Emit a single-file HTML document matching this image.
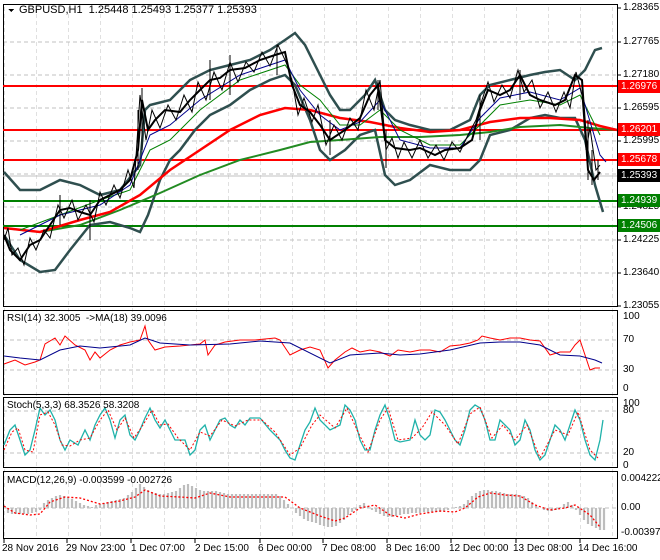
<!DOCTYPE html>
<html><head><meta charset="utf-8"><style>
body{margin:0;background:#fff;width:660px;height:560px;overflow:hidden;font-family:"Liberation Sans",sans-serif}
.l{position:absolute;font-size:10px;color:#000;white-space:nowrap}
.tag{position:absolute;left:618px;width:42px;height:13px;font-size:10px;color:#fff;line-height:13px;padding-left:3px;box-sizing:border-box}
</style></head><body>
<svg width="660" height="560" style="position:absolute;left:0;top:0" shape-rendering="crispEdges">
<defs><pattern id="g" x="4" y="0" width="32" height="560" patternUnits="userSpaceOnUse"><line x1="0" y1="0" x2="0" y2="560" stroke="#c0c0c0" stroke-dasharray="4,3"/></pattern></defs>
<rect x="4" y="4" width="613" height="534" fill="url(#g)"/>
<g stroke="#c0c0c0" stroke-dasharray="4,3">
<line x1="3" y1="42" x2="617" y2="42"/><line x1="3" y1="75" x2="617" y2="75"/><line x1="3" y1="108" x2="617" y2="108"/><line x1="3" y1="141" x2="617" y2="141"/><line x1="3" y1="174" x2="617" y2="174"/><line x1="3" y1="207" x2="617" y2="207"/><line x1="3" y1="240" x2="617" y2="240"/><line x1="3" y1="273" x2="617" y2="273"/>
<line x1="3" y1="340" x2="617" y2="340"/><line x1="3" y1="370" x2="617" y2="370"/>
<line x1="3" y1="411" x2="617" y2="411"/><line x1="3" y1="453" x2="617" y2="453"/>
<line x1="3" y1="508" x2="617" y2="508"/>
</g>
<g fill="none" stroke="#000">
<rect x="3.5" y="4.5" width="614" height="302"/>
<rect x="3.5" y="310.5" width="614" height="84"/>
<rect x="3.5" y="397.5" width="614" height="70"/>
<rect x="3.5" y="471.5" width="614" height="67"/>
</g>
<g shape-rendering="auto">
<line x1="3" y1="86" x2="617" y2="86" stroke="#f00" stroke-width="2"/>
<line x1="3" y1="130" x2="617" y2="130" stroke="#f00" stroke-width="2"/>
<line x1="3" y1="160" x2="617" y2="160" stroke="#f00" stroke-width="2"/>
<line x1="3" y1="201" x2="617" y2="201" stroke="#008000" stroke-width="2"/>
<line x1="3" y1="226" x2="617" y2="226" stroke="#008000" stroke-width="2"/>
<line x1="3" y1="176" x2="617" y2="176" stroke="#c0c0c0"/>
<polyline fill="none" stroke="#2f4f4f" stroke-width="2.5" points="4,172 20,190 40,190 60,180 80,185 100,195 120,190 140,165 145,110 150,105 170,100 190,80 210,70 230,65 250,60 270,50 285,40 295,33 305,45 320,75 330,95 340,110 350,110 365,95 375,80 385,110 395,120 410,125 430,130 450,130 470,120 480,95 490,85 510,80 530,75 545,72 560,70 575,80 585,70 595,50 602,48"/>
<polyline fill="none" stroke="#2f4f4f" stroke-width="2.5" points="4,235 20,260 40,272 55,270 70,250 90,225 110,222 130,228 140,232 148,215 160,180 170,160 180,150 195,130 210,115 230,105 250,90 270,80 285,75 295,85 310,120 320,150 330,160 345,150 360,135 375,130 385,175 395,185 410,180 430,165 450,170 470,170 480,160 490,135 510,130 530,118 545,115 560,118 575,118 585,140 595,185 603,212"/>
<polyline fill="none" stroke="#228b22" stroke-width="2" points="4,228 40,232 80,225 120,210 160,193 200,175 240,160 280,150 310,142 340,140 380,137 420,137 460,135 490,132 520,127 560,125 590,128 617,130"/>
<polyline fill="none" stroke="#f00" stroke-width="2.5" points="4,228 40,232 80,220 110,212 140,195 170,170 200,150 230,130 260,115 285,108 310,110 340,118 370,122 400,128 430,132 460,130 490,122 520,118 550,118 580,120 600,126 617,130"/>
<polyline fill="none" stroke="#008000" points="20,230 60,215 100,200 130,190 150,150 170,140 200,110 240,80 285,65 300,85 320,100 340,125 360,125 380,110 400,130 430,145 460,145 480,125 500,105 530,100 560,105 580,95 600,135"/>
<polyline fill="none" stroke="#00008b" points="20,235 60,215 100,205 130,185 150,135 170,125 200,100 240,75 285,60 300,90 320,115 340,130 360,122 380,100 400,140 430,148 460,148 480,118 500,98 530,92 560,100 580,88 600,155 606,162"/>
<polyline fill="none" stroke="#000" stroke-width="2" points="4,235 10,250 20,260 30,245 40,240 50,225 60,210 70,208 80,212 90,215 100,200 110,195 120,190 130,180 138,150 142,100 148,130 155,120 165,110 180,112 190,100 200,90 210,80 220,78 230,70 245,68 260,60 275,55 285,52 292,85 300,105 310,112 320,125 330,140 345,130 360,118 370,95 378,85 385,140 395,148 410,150 420,148 435,155 445,150 460,148 472,140 480,110 488,90 500,95 510,90 520,75 530,95 540,100 555,105 565,100 575,75 582,80 588,170 594,180 600,172"/>
<polyline fill="none" stroke="#000" stroke-width="1" points="4,240 8,228 12,255 18,248 24,265 30,238 36,250 44,230 50,238 58,205 64,218 72,200 78,220 86,205 94,222 100,192 106,205 114,185 120,198 128,170 134,188 140,95 146,140 152,110 160,128 168,105 176,120 184,95 192,112 198,82 206,100 214,72 222,90 230,62 238,82 246,62 254,72 262,52 270,66 278,45 286,62 292,80 298,115 304,98 312,122 318,105 326,145 334,125 342,140 350,118 358,130 366,90 374,110 380,80 386,150 392,138 398,158 404,142 412,158 420,140 428,158 436,145 444,160 452,142 460,152 468,135 476,120 482,100 488,82 494,102 502,85 510,98 518,70 524,92 532,80 540,108 548,92 556,112 564,92 570,108 576,72 582,95 586,150 590,128 596,170 600,165"/>
<g stroke="#000"><line x1="142" y1="88" x2="142" y2="150"/><line x1="138" y1="110" x2="138" y2="170"/><line x1="210" y1="60" x2="210" y2="100"/><line x1="230" y1="55" x2="230" y2="95"/><line x1="277" y1="45" x2="277" y2="75"/><line x1="330" y1="120" x2="330" y2="155"/><line x1="378" y1="80" x2="378" y2="110"/><line x1="386" y1="130" x2="386" y2="168"/><line x1="480" y1="95" x2="480" y2="140"/><line x1="520" y1="70" x2="520" y2="100"/><line x1="588" y1="120" x2="588" y2="180"/><line x1="592" y1="150" x2="592" y2="185"/><line x1="598" y1="160" x2="598" y2="180"/><line x1="90" y1="200" x2="90" y2="240"/><line x1="60" y1="195" x2="60" y2="225"/></g>
<polyline fill="none" stroke="#f00" points="4,364 15,360 25,365 35,362 40,360 45,344 55,338 60,345 65,336 75,345 85,350 90,360 95,352 100,358 110,350 120,345 130,342 140,340 145,326 148,340 155,350 165,347 180,346 200,344 205,340 208,355 215,345 225,342 240,340 255,340 265,339 275,338 280,340 290,355 300,350 310,347 320,350 328,368 335,360 345,352 352,348 360,352 370,350 380,352 390,356 398,350 410,352 420,350 430,350 440,352 450,346 460,345 470,343 478,340 482,336 490,338 500,340 510,338 520,338 530,340 540,341 550,355 560,352 570,352 575,345 580,340 585,355 590,370 595,368 600,368"/>
<polyline fill="none" stroke="#00008b" points="4,356 20,358 40,360 60,350 80,346 100,348 130,345 145,338 160,343 190,345 230,344 260,341 290,343 330,363 350,355 380,353 400,355 420,354 450,350 480,343 500,342 520,342 540,345 560,355 580,356 595,360 602,363"/>
<polyline fill="none" stroke="#20b2aa" stroke-width="1.3" points="4,445 10,430 15,425 20,440 25,455 30,450 35,430 40,408 45,415 50,410 55,420 60,440 65,450 70,440 78,445 85,430 90,440 95,425 100,415 105,408 110,420 115,438 120,420 125,415 130,435 135,440 140,430 145,418 150,408 155,420 160,428 165,420 170,430 175,440 180,440 185,440 190,455 195,450 200,430 205,425 210,440 215,430 220,420 225,418 230,425 235,428 240,420 245,425 250,418 260,418 270,430 280,440 285,450 290,458 295,460 300,445 305,430 310,422 315,408 320,420 330,430 340,425 345,405 350,410 355,420 360,440 365,450 370,450 375,430 380,415 385,405 390,420 395,440 400,442 410,440 415,420 420,435 425,440 430,435 435,410 440,412 445,420 450,430 455,440 460,445 465,430 470,410 475,405 480,408 485,420 490,440 495,440 500,420 505,425 510,430 515,445 520,440 525,420 530,430 535,450 540,460 545,455 550,440 555,425 560,430 565,440 570,425 575,410 580,420 585,440 590,455 595,460 600,440 603,420"/>
<polyline fill="none" stroke="#f00" stroke-dasharray="2,2" points="4,450 12,432 18,428 25,450 33,452 40,415 48,412 55,425 62,445 70,446 80,440 90,438 100,420 108,410 117,430 125,418 134,438 143,425 152,410 160,425 168,424 178,438 190,450 200,432 210,436 222,420 235,426 248,420 262,420 275,432 290,455 300,448 312,425 320,415 335,428 347,408 358,432 368,452 380,420 388,408 398,440 412,438 422,428 432,412 445,425 458,444 470,414 480,407 492,438 503,425 515,440 527,425 540,458 555,430 568,435 578,412 590,450 598,458"/>
<g stroke="#bdbdbd" stroke-width="2.2">
<path d="M8,508V513M12,508V514M16,508V514M20,508V514M24,508V514M28,508V514M32,508V513M36,508V512M40,508V510M44,508V503M48,508V500M52,508V498M56,508V496M60,508V495M64,508V496M68,508V497M72,508V499M76,508V501M80,508V503M84,508V505M88,508V506M92,508V507M96,508V505M100,508V504M104,508V503M108,508V502M112,508V501M116,508V500M120,508V499M124,508V498M128,508V495M132,508V492M136,508V488M140,508V484M144,508V487M148,508V490M152,508V492M156,508V493M160,508V494M164,508V494M168,508V493M172,508V492M176,508V491M180,508V488M184,508V485M188,508V484M192,508V486M196,508V488M200,508V490M204,508V491M208,508V491M212,508V491M216,508V491M220,508V492M224,508V493M228,508V494M232,508V494M236,508V494M240,508V494M244,508V494M248,508V494M252,508V494M256,508V494M260,508V494M264,508V494M268,508V494M272,508V494M276,508V494M280,508V496M284,508V500M288,508V504M292,508V508M296,508V513M300,508V516M304,508V519M308,508V521M312,508V522M316,508V523M320,508V525M324,508V526M328,508V527M332,508V527M336,508V526M340,508V523M344,508V520M348,508V515M352,508V512M356,508V510M360,508V505M364,508V503M368,508V506M372,508V510M376,508V512M380,508V514M384,508V516M388,508V517M392,508V517M396,508V516M400,508V515M404,508V514M408,508V514M412,508V513M416,508V513M420,508V513M424,508V512M428,508V513M432,508V512M436,508V512M440,508V512M444,508V511M448,508V510M452,508V508M456,508V507M460,508V506M464,508V504M468,508V500M472,508V496M476,508V493M480,508V491M484,508V490M488,508V490M492,508V491M496,508V491M500,508V492M504,508V493M508,508V494M512,508V494M516,508V494M520,508V495M524,508V496M528,508V498M532,508V502M536,508V506M540,508V508M544,508V510M548,508V511M552,508V511M556,508V510M560,508V507M564,508V504M568,508V502M572,508V505M576,508V510M580,508V515M584,508V520M588,508V524M592,508V526M596,508V528M600,508V530M604,508V530"/>
</g>
<polyline fill="none" stroke="#f00" stroke-width="1.3" stroke-dasharray="2,2" points="4,506 15,513 30,515 40,514 50,502 65,497 80,498 100,504 120,501 135,497 145,490 160,496 180,497 195,498 210,493 230,497 260,497 285,497 300,508 320,516 335,521 345,518 360,508 375,505 390,515 405,518 420,514 440,511 455,512 465,508 478,497 490,493 505,495 520,496 535,505 550,510 565,508 575,505 590,515 600,527"/>
</g>
<g stroke="#000"><line x1="617" y1="8" x2="621" y2="8"/><line x1="617" y1="42" x2="621" y2="42"/><line x1="617" y1="75" x2="621" y2="75"/><line x1="617" y1="108" x2="621" y2="108"/><line x1="617" y1="141" x2="621" y2="141"/><line x1="617" y1="207" x2="621" y2="207"/><line x1="617" y1="240" x2="621" y2="240"/><line x1="617" y1="273" x2="621" y2="273"/><line x1="617" y1="306" x2="621" y2="306"/></g>
<g stroke="#000"><line x1="4" y1="539" x2="4" y2="543"/><line x1="67" y1="539" x2="67" y2="543"/><line x1="131" y1="539" x2="131" y2="543"/><line x1="195" y1="539" x2="195" y2="543"/><line x1="260" y1="539" x2="260" y2="543"/><line x1="323" y1="539" x2="323" y2="543"/><line x1="387" y1="539" x2="387" y2="543"/><line x1="451" y1="539" x2="451" y2="543"/><line x1="516" y1="539" x2="516" y2="543"/><line x1="580" y1="539" x2="580" y2="543"/></g>
<polygon points="8,9 14,9 11,12" fill="#000"/>
</svg>
<div class="l" style="left:19px;top:4px;font-size:11px">GBPUSD,H1&nbsp; 1.25448 1.25493 1.25377 1.25393</div>
<div class="l" style="left:7px;top:313px">RSI(14) 32.3005&nbsp; -&gt;MA(18) 39.0096</div>
<div class="l" style="left:7px;top:400px">Stoch(5,3,3) 68.3526 58.3208</div>
<div class="l" style="left:7px;top:475px">MACD(12,26,9) -0.003599 -0.002726</div>
<div class="l" style="left:623px;top:2px">1.28365</div>
<div class="l" style="left:623px;top:36px">1.27765</div>
<div class="l" style="left:623px;top:69px">1.27180</div>
<div class="l" style="left:623px;top:102px">1.26595</div>
<div class="l" style="left:623px;top:135px">1.25995</div>
<div class="l" style="left:623px;top:201px">1.24825</div>
<div class="l" style="left:623px;top:234px">1.24225</div>
<div class="l" style="left:623px;top:267px">1.23640</div>
<div class="l" style="left:623px;top:300px">1.23055</div>
<div class="tag" style="top:80px;background:#f00">1.26976</div>
<div class="tag" style="top:123px;background:#f00">1.26201</div>
<div class="tag" style="top:153px;background:#f00">1.25678</div>
<div class="tag" style="top:169px;background:#000">1.25393</div>
<div class="tag" style="top:194px;background:#008000">1.24939</div>
<div class="tag" style="top:219px;background:#008000">1.24506</div>
<div class="l" style="left:623px;top:311px">100</div>
<div class="l" style="left:623px;top:334px">70</div>
<div class="l" style="left:623px;top:364px">30</div>
<div class="l" style="left:623px;top:383px">0</div>
<div class="l" style="left:623px;top:398px">100</div>
<div class="l" style="left:623px;top:405px">80</div>
<div class="l" style="left:623px;top:447px">20</div>
<div class="l" style="left:623px;top:460px">0</div>
<div class="l" style="left:621px;top:473px">0.004222</div>
<div class="l" style="left:621px;top:502px">0.00</div>
<div class="l" style="left:621px;top:527px">-0.003971</div>
<div class="l" style="left:2px;top:543px">28 Nov 2016</div>
<div class="l" style="left:66px;top:543px">29 Nov 23:00</div>
<div class="l" style="left:131px;top:543px">1 Dec 07:00</div>
<div class="l" style="left:195px;top:543px">2 Dec 15:00</div>
<div class="l" style="left:258px;top:543px">6 Dec 00:00</div>
<div class="l" style="left:322px;top:543px">7 Dec 08:00</div>
<div class="l" style="left:386px;top:543px">8 Dec 16:00</div>
<div class="l" style="left:449px;top:543px">12 Dec 00:00</div>
<div class="l" style="left:513px;top:543px">13 Dec 08:00</div>
<div class="l" style="left:578px;top:543px">14 Dec 16:00</div>
</body></html>
